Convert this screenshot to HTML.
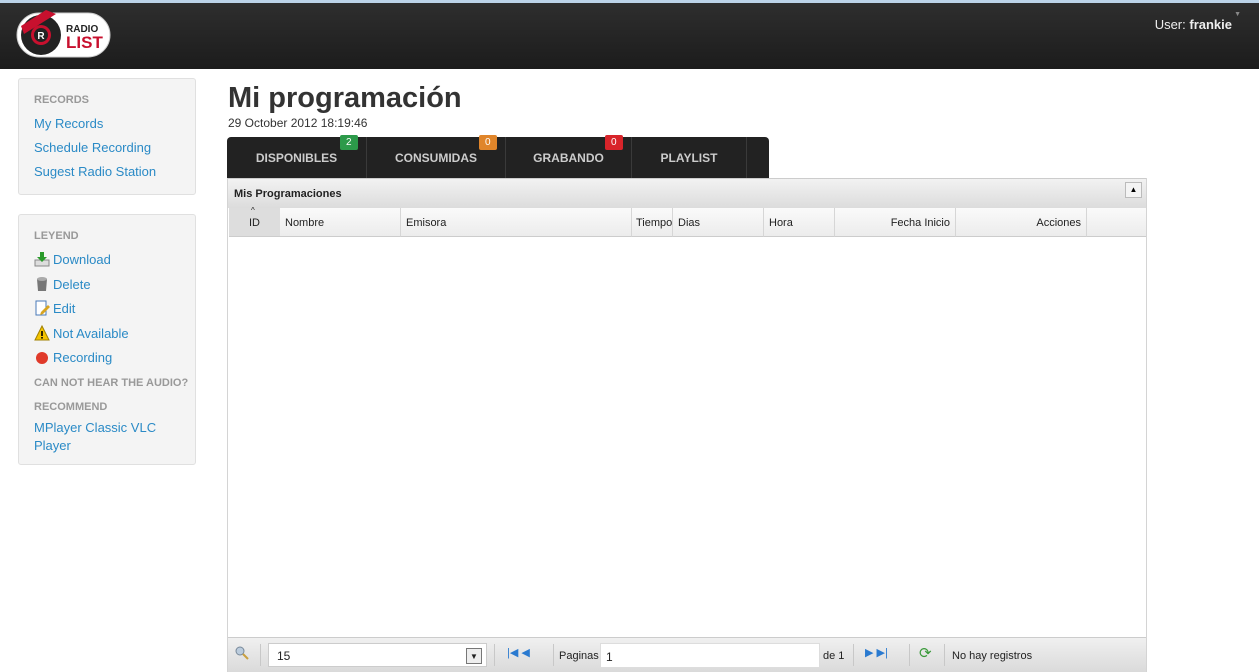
<!DOCTYPE html>
<html><head><meta charset="utf-8"><style>
*{margin:0;padding:0;box-sizing:border-box}
body{width:1259px;height:672px;overflow:hidden;background:#fff;font-family:"Liberation Sans",Arial,sans-serif;position:relative}
.hdr{position:absolute;left:0;top:0;width:1259px;height:69px;background:linear-gradient(#2e2e2e,#1c1c1c);border-top:3px solid #bcd3e8}
.user{position:absolute;right:27px;top:14px;color:#eee;font-size:13px}
.side{position:absolute;left:18px;width:178px;background:#f4f4f4;border:1px solid #e0e0e0;border-radius:3px}
.side .h{font-size:11px;line-height:13px;color:#999;font-weight:bold;margin-left:15px;text-transform:uppercase}
.side a{display:block;color:#2a8ac6;font-size:13px;text-decoration:none;margin-left:15px;height:24px;line-height:24px}
.side2 a{height:24.5px;line-height:24.5px}
.ic{display:inline-block;width:16px;height:16px;vertical-align:-3px;margin-right:3px}
h1{position:absolute;left:228px;top:82px;font-size:29px;color:#333;font-weight:bold}
.date{position:absolute;left:228px;top:116px;font-size:12px;color:#333}
.tabs{position:absolute;left:227px;top:137px;width:542px;height:41px;background:#222;border-radius:4px 4px 0 0}
.tab{position:absolute;top:0;height:41px;line-height:42px;color:#ccc;font-size:12px;font-weight:bold;text-align:center;border-right:1px solid #3a3a3a}
.badge{position:absolute;top:-2px;height:15px;line-height:15px;padding:0 6px;font-size:10px;color:#fff;border-radius:2px}
.grid{position:absolute;left:227px;top:178px;width:920px;height:494px;border:1px solid #d4d4d4;border-top:none}
.cap{height:30px;background:linear-gradient(#f2f2f2,#dcdcdc);font-size:11px;font-weight:bold;padding:9px 6px;color:#222;border-top:1px solid #ccc}
.col{position:absolute;top:30px;height:29px;font-size:11px;color:#222;padding:9px 5px 0;border-right:1px solid #d6d6d6;background:linear-gradient(#fafafa,#ececec);border-bottom:1px solid #ccc}
.foot{position:absolute;left:0;top:459px;width:918px;height:35px;background:linear-gradient(#f0f0f0,#dadada);border-top:1px solid #ccc;font-size:11px;color:#222}
.foot>*{position:absolute}
.sep{top:6px;width:1px;height:22px;background:#c8c8c8}
</style></head><body>
<div class="hdr">
<svg style="position:absolute;left:16px;top:7px" width="96" height="50" viewBox="0 0 96 50">
<rect x="1" y="3" width="93" height="44" rx="22" fill="#fff" stroke="#ccc"/>
<circle cx="25" cy="25" r="20" fill="#222"/>
<path d="M5 16 L30 0 L40 4 L8 24Z" fill="#c8102e"/>
<circle cx="25" cy="25" r="10" fill="#c8102e"/><circle cx="25" cy="25" r="7" fill="#222"/>
<text x="25" y="29" font-size="10" font-weight="bold" fill="#fff" text-anchor="middle" font-family="Liberation Sans">R</text>
<text x="50" y="22" font-size="10" font-weight="bold" fill="#222" font-family="Liberation Sans">RADIO</text>
<text x="50" y="38" font-size="17" font-weight="bold" fill="#c8102e" font-family="Liberation Sans">LIST</text>
</svg>
<div class="user">User: <b>frankie</b></div>
<div style="position:absolute;right:18px;top:8px;color:#888;font-size:7px">▼</div>
</div>

<div class="side" style="top:78px;height:117px">
<div class="h" style="margin-top:15px">Records</div>
<a style="margin-top:5px">My Records</a>
<a>Schedule Recording</a>
<a>Sugest Radio Station</a>
</div>
<div class="side side2" style="top:214px;height:251px">
<div class="h" style="margin-top:15px">Leyend</div>
<a style="margin-top:5px"><svg class="ic" viewBox="0 0 16 16"><rect x="1" y="9" width="14" height="6" fill="#ddd" stroke="#888"/><path d="M6 1h4v5h3l-5 5-5-5h3z" fill="#2a9a2a"/></svg>Download</a>
<a><svg class="ic" viewBox="0 0 16 16"><path d="M3 3h10l-1 12H4z" fill="#777"/><ellipse cx="8" cy="3" rx="5" ry="2" fill="#aaa"/></svg>Delete</a>
<a><svg class="ic" viewBox="0 0 16 16"><rect x="2" y="1" width="10" height="14" fill="#fff" stroke="#4a7ab8"/><path d="M7 12l7-7 2 2-7 7-3 1z" fill="#d9a520"/></svg>Edit</a>
<a><svg class="ic" viewBox="0 0 16 16"><path d="M8 1L15 15H1z" fill="#f4c400" stroke="#a08000"/><rect x="7.2" y="6" width="1.6" height="5" fill="#000"/><rect x="7.2" y="12" width="1.6" height="1.6" fill="#000"/></svg>Not Available</a>
<a><svg class="ic" viewBox="0 0 16 16"><circle cx="8" cy="9" r="6" fill="#e03a2a"/></svg>Recording</a>
<div class="h" style="margin-top:6px">Can not hear the audio?</div>
<div class="h" style="margin-top:11px">Recommend</div>
<a style="margin-top:5px;line-height:18px;height:auto">MPlayer Classic VLC Player</a>
</div>

<h1>Mi programación</h1>
<div class="date">29 October 2012 18:19:46</div>
<div class="tabs">
<div class="tab" style="left:0;width:140px">DISPONIBLES</div>
<div class="tab" style="left:140px;width:139px">CONSUMIDAS</div>
<div class="tab" style="left:279px;width:126px">GRABANDO</div>
<div class="tab" style="left:405px;width:115px">PLAYLIST</div>
<div class="badge" style="left:113px;background:#2c9a4a">2</div>
<div class="badge" style="left:252px;background:#e0852a">0</div>
<div class="badge" style="left:378px;background:#d8242a">0</div>
</div>

<div class="grid">
<div class="cap">Mis Programaciones</div>
<div style="position:absolute;right:4px;top:4px;width:17px;height:16px;border:1px solid #bbb;background:#f4f4f4;font-size:8px;text-align:center;line-height:14px">▲</div>
<div class="col" style="left:1px;width:52px;text-align:center;background:#ddd">ID<span style="position:absolute;left:22px;top:-2px;font-size:8px">^</span></div>
<div class="col" style="left:52px;width:121px">Nombre</div>
<div class="col" style="left:173px;width:231px">Emisora</div>
<div class="col" style="left:404px;width:41px;padding-left:4px">Tiempo</div>
<div class="col" style="left:445px;width:91px">Dias</div>
<div class="col" style="left:536px;width:71px">Hora</div>
<div class="col" style="left:607px;width:121px;text-align:right">Fecha Inicio</div>
<div class="col" style="left:728px;width:131px;text-align:right">Acciones</div>
<div class="col" style="left:859px;width:59px;border-right:none"></div>
<div class="foot">
<svg style="left:7px;top:8px" width="14" height="14"><circle cx="5" cy="5" r="4" fill="#bcd" stroke="#789"/><path d="M8 8l5 5" stroke="#c9a040" stroke-width="2"/></svg>
<div class="sep" style="left:32px"></div>
<div style="left:40px;top:5px;width:219px;height:24px;background:#fff;border:1px solid #ccc;font-size:12px;padding:5px 8px">15</div>
<div style="left:238px;top:10px;width:16px;height:16px;border:1px solid #777;background:#eee;font-size:8px;text-align:center;line-height:15px">▼</div>
<div class="sep" style="left:266px"></div>
<div style="left:279px;top:8px;color:#2a7ad0;font-size:11px">|◀ ◀</div>
<div class="sep" style="left:325px"></div>
<div style="left:331px;top:12px">Paginas</div>
<div style="left:372px;top:5px;width:220px;height:25px;background:#fff;border:1px solid #ddd;font-size:12px;padding:6px 5px">1</div>
<div style="left:595px;top:12px">de 1</div>
<div class="sep" style="left:625px"></div>
<div style="left:637px;top:8px;color:#2a7ad0;font-size:11px">▶ ▶|</div>
<div class="sep" style="left:681px"></div>
<div style="left:691px;top:6px;color:#3a9a3a;font-size:15px">⟳</div>
<div class="sep" style="left:716px"></div>
<div style="left:724px;top:12px">No hay registros</div>
</div>
</div>
</body></html>
